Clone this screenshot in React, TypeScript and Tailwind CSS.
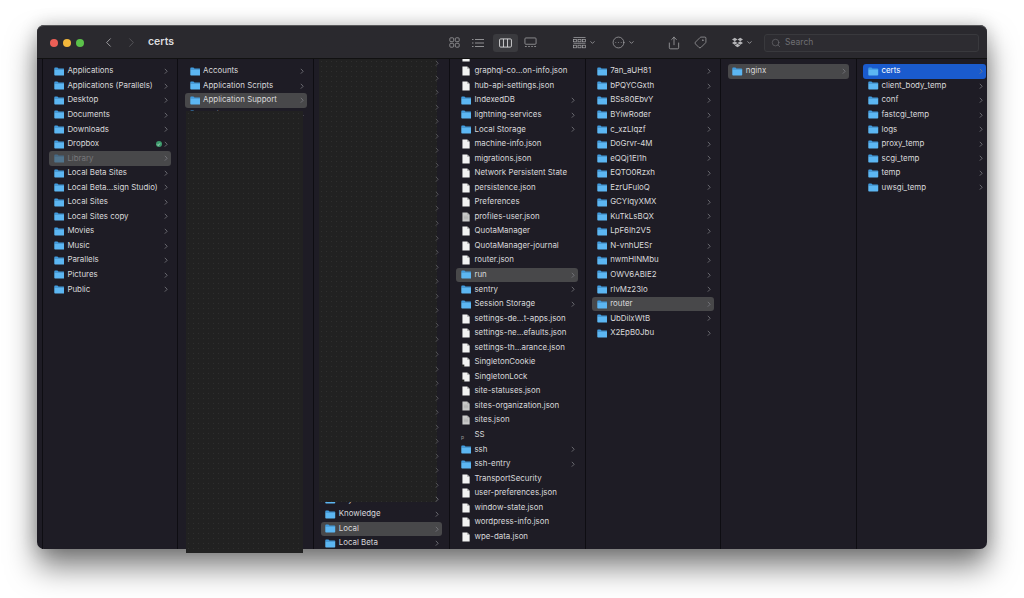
import { ChevronLeft, ChevronRight, ChevronDown, Search, Share, Tag, CircleEllipsis } from 'lucide-react';
import { FaDropbox } from 'react-icons/fa';

type Kind = 'dir' | 'file' | 'grayfile' | 'alias' | 'exec';

type Item = {
  name: string;
  kind?: Kind;
  active?: boolean;
  blue?: boolean;
  dim?: boolean;
  synced?: boolean;
};

const FolderIcon = ({ dim }: { dim?: boolean }) => (
  <svg viewBox="0 0 11 9" className={`w-[10.5px] h-[9px] shrink-0 ${dim ? 'opacity-40' : ''}`}>
    <path d="M0.3 1.1C0.3 0.6 0.6 0.3 1.1 0.3H3.6L4.7 1.4H9.9C10.4 1.4 10.7 1.7 10.7 2.2V2.6H0.3Z" fill="#3f9be0" />
    <path d="M0.3 2.4H10.7V8C10.7 8.5 10.4 8.8 9.9 8.8H1.1C0.6 8.8 0.3 8.5 0.3 8Z" fill="#5cb6f2" />
  </svg>
);

const FileIcon = ({ gray, alias }: { gray?: boolean; alias?: boolean }) => (
  <svg viewBox="0 0 9 11" className="w-[8px] h-[10px] ml-[1px] mr-[1.5px] shrink-0">
    <path d="M0.5 0.3H5.8L8.6 3.1V10.7H0.5Z" fill={gray ? '#c9c9c9' : '#f2f2f2'} />
    <path d="M5.8 0.3L8.6 3.1H5.8Z" fill="#a8a8a8" />
    {gray && <path d="M2 4.5H7M2 6H7M2 7.5H7" stroke="#9a9a9a" strokeWidth="0.5" />}
    {alias && <rect x="0" y="8.4" width="2.6" height="2.6" fill="#222" />}
  </svg>
);

const Chevron = ({ dim }: { dim?: boolean }) => (
  <svg viewBox="0 0 5 8" className={`w-[4px] h-[6.5px] shrink-0 relative z-10 ${dim ? 'text-[#5f5f63]' : 'text-[#7c7c81]'}`}>
    <path d="M1 1L4 4L1 7" fill="none" stroke="currentColor" strokeWidth="1" />
  </svg>
);

const Row = ({ item }: { item: Item }) => {
  const kind = item.kind ?? 'dir';
  const bg = item.blue ? 'bg-[#1a5bcd]' : item.active ? 'bg-[#48484a]' : '';
  const text = item.blue ? 'text-white' : item.dim ? 'text-[#77777a]' : 'text-[#d9d9db]';

  return (
    <div className={`h-[14.55px] shrink-0 flex items-center pl-[4.6px] pr-[3px] rounded-[3px] ${bg}`}>
      {kind === 'dir' && <FolderIcon dim={item.dim} />}
      {kind === 'file' && <FileIcon />}
      {kind === 'grayfile' && <FileIcon gray />}
      {kind === 'alias' && <FileIcon alias />}
      {kind === 'exec' && (
        <span className="w-[10.5px] shrink-0 text-[5px] leading-none pt-[6px] text-[#9a9a9a]">p</span>
      )}
      <span className={`ml-[3px] flex-1 whitespace-nowrap ${text}`}>{item.name}</span>
      {item.synced && (
        <span className="w-[6px] h-[6px] rounded-full bg-[#3c9a6c] mr-[2px] flex items-center justify-center">
          <svg viewBox="0 0 6 6" className="w-[5px] h-[5px]">
            <path d="M1.4 3L2.6 4.2L4.6 1.8" fill="none" stroke="#e8f5ee" strokeWidth="0.8" />
          </svg>
        </span>
      )}
      {kind === 'dir' && <Chevron />}
    </div>
  );
};

const names = (list: string[], kind: Kind = 'dir'): Item[] => list.map((name) => ({ name, kind }));

const col1: Item[] = [
  ...names(['Applications', 'Applications (Parallels)', 'Desktop', 'Documents', 'Downloads']),
  { name: 'Dropbox', synced: true },
  { name: 'Library', active: true, dim: true },
  ...names([
    'Local Beta Sites',
    'Local Beta...sign Studio)',
    'Local Sites',
    'Local Sites copy',
    'Movies',
    'Music',
    'Parallels',
    'Pictures',
    'Public',
  ]),
];

const col2: Item[] = [
  { name: 'Accounts' },
  { name: 'Application Scripts' },
  { name: 'Application Support', active: true },
  { name: 'Assistant' },
];

const col4: Item[] = [
  { name: '', kind: 'file' },
  ...names(['graphql-co...on-info.json', 'hub-api-settings.json'], 'file'),
  ...names(['IndexedDB', 'lightning-services', 'Local Storage']),
  ...names(['machine-info.json', 'migrations.json', 'Network Persistent State', 'persistence.json', 'Preferences'], 'file'),
  { name: 'profiles-user.json', kind: 'grayfile' },
  ...names(['QuotaManager', 'QuotaManager-journal', 'router.json'], 'file'),
  { name: 'run', active: true },
  ...names(['sentry', 'Session Storage']),
  ...names(['settings-de...t-apps.json', 'settings-ne...efaults.json', 'settings-th...arance.json'], 'file'),
  ...names(['SingletonCookie', 'SingletonLock'], 'alias'),
  { name: 'site-statuses.json', kind: 'file' },
  ...names(['sites-organization.json', 'sites.json'], 'grayfile'),
  { name: 'SS', kind: 'exec' },
  ...names(['ssh', 'ssh-entry']),
  ...names(['TransportSecurity', 'user-preferences.json', 'window-state.json', 'wordpress-info.json', 'wpe-data.json'], 'file'),
];

const col5: Item[] = [
  ...names([
    '7an_aUH81',
    'bPQYCGxth',
    'BSs80EbvY',
    'BYiwRoder',
    'c_xzLIqzf',
    'DoGrvr-4M',
    'eQQj1EI1h',
    'EQTO0Rzxh',
    'EzrUFuloQ',
    'GCYIqyXMX',
    'KuTkLsBQX',
    'LpF6Ih2V5',
    'N-vnhUESr',
    'nwmHINMbu',
    'OWV6ABIE2',
    'rIvMz23lo',
  ]),
  { name: 'router', active: true },
  ...names(['UbDilxWtB', 'X2EpB0Jbu']),
];

const col7: Item[] = [
  { name: 'certs', blue: true },
  ...names(['client_body_temp', 'conf', 'fastcgi_temp', 'logs', 'proxy_temp', 'scgi_temp', 'temp', 'uwsgi_temp']),
];

const dots = 'bg-[#212121] bg-[radial-gradient(#2e2e2e_0.5px,transparent_0.7px)] bg-[length:5px_5px]';

const Column = ({ items }: { items: Item[] }) => (
  <div className="w-[135.7px] shrink-0 border-r border-[#0e0d12] px-[6.5px] pt-[5px] flex flex-col">
    {items.map((item) => (
      <Row key={item.name} item={item} />
    ))}
  </div>
);

const ToolbarIcons = () => (
  <div className="flex items-center text-[#a9a9ac]">
    <svg viewBox="0 0 12 12" className="w-[11px] h-[11px]" fill="none" stroke="currentColor" strokeWidth="0.8">
      <rect x="0.9" y="0.9" width="4.2" height="4.2" rx="1" />
      <rect x="6.9" y="0.9" width="4.2" height="4.2" rx="1" />
      <rect x="0.9" y="6.9" width="4.2" height="4.2" rx="1" />
      <rect x="6.9" y="6.9" width="4.2" height="4.2" rx="1" />
    </svg>
    <svg viewBox="0 0 12 10" className="w-[12px] h-[10px] ml-[12px]" fill="none" stroke="currentColor" strokeWidth="0.8">
      <path d="M3 1.5H12M3 5H12M3 8.5H12M0 1.5H1.5M0 5H1.5M0 8.5H1.5" />
    </svg>
    <div className="w-[25px] h-[18px] ml-[9px] rounded-[3px] bg-[#3a3a3e] flex items-center justify-center text-[#e4e4e6]">
      <svg viewBox="0 0 14 10" className="w-[13px] h-[10px]" fill="none" stroke="currentColor" strokeWidth="0.9">
        <rect x="0.6" y="0.6" width="12.8" height="8.8" rx="1.2" />
        <path d="M4.8 0.6V9.4M9.2 0.6V9.4" />
      </svg>
    </div>
    <svg viewBox="0 0 14 11" className="w-[13px] h-[11px] ml-[6px]" fill="none" stroke="currentColor" strokeWidth="0.8">
      <rect x="1" y="0.6" width="12" height="6.8" rx="1" />
      <path d="M1 9.8H3M4.5 9.8H6.3M7.8 9.8H9.6M11 9.8H13" />
    </svg>
  </div>
);

const GroupIcon = () => (
  <div className="flex items-center gap-[3px] text-[#a9a9ac]">
    <svg viewBox="0 0 13 12" className="w-[13px] h-[12px]" fill="none" stroke="currentColor" strokeWidth="0.7">
      <path d="M0.5 0.5H12.5" />
      <rect x="0.5" y="2.4" width="3" height="2.4" />
      <rect x="5" y="2.4" width="3" height="2.4" />
      <rect x="9.5" y="2.4" width="3" height="2.4" />
      <path d="M0.5 6.3H12.5" />
      <rect x="0.5" y="8.2" width="3" height="2.6" />
      <rect x="5" y="8.2" width="3" height="2.6" />
      <rect x="9.5" y="8.2" width="3" height="2.6" />
    </svg>
    <ChevronDown className="w-[7px] h-[7px]" strokeWidth={2.5} />
  </div>
);

const TitleBar = () => (
  <div className="h-[34px] shrink-0 bg-[#2a292e] border-t border-[#58585a] rounded-t-[7px] flex items-center pl-[13px] pt-[1px] border-b-[#111] border-b">
    <div className="flex items-center gap-[5px]">
      <span className="w-[8px] h-[8px] rounded-full bg-[#ec5f56]" />
      <span className="w-[8px] h-[8px] rounded-full bg-[#f3b73b]" />
      <span className="w-[8px] h-[8px] rounded-full bg-[#5bc14a]" />
    </div>
    <ChevronLeft className="w-[15px] h-[15px] ml-[17px] text-[#b5b5b8]" strokeWidth={1.3} />
    <ChevronRight className="w-[15px] h-[15px] ml-[8px] text-[#5c5c60]" strokeWidth={1.3} />
    <span className="ml-[9px] text-[10.5px] font-semibold text-[#dcdcde]">certs</span>
    <div className="ml-[275px]">
      <ToolbarIcons />
    </div>
    <div className="ml-[36px]">
      <GroupIcon />
    </div>
    <div className="ml-[16px] flex items-center gap-[3px] text-[#a9a9ac]">
      <CircleEllipsis className="w-[13px] h-[13px]" strokeWidth={1.3} />
      <ChevronDown className="w-[7px] h-[7px]" strokeWidth={2.5} />
    </div>
    <Share className="w-[14px] h-[14px] ml-[32px] text-[#a9a9ac]" strokeWidth={1.3} />
    <Tag className="w-[13px] h-[13px] ml-[13px] text-[#a9a9ac] rotate-90" strokeWidth={1.3} />
    <div className="ml-[25px] flex items-center gap-[3px] text-[#b5b5b8]">
      <FaDropbox className="w-[11px] h-[11px]" />
      <ChevronDown className="w-[7px] h-[7px]" strokeWidth={2.5} />
    </div>
    <div className="ml-[11px] w-[215px] h-[18px] rounded-[3px] border border-[#39393d] bg-[#2d2c31] flex items-center pl-[6px] gap-[4px] text-[#6f6f73]">
      <Search className="w-[10px] h-[10px]" strokeWidth={1.5} />
      <span className="text-[8.5px]">Search</span>
    </div>
  </div>
);

const App = () => {
  return (
    <div className="w-[1024px] h-[598px] bg-white overflow-hidden pl-[37px] pt-[25px] font-['Inter',sans-serif]">
      <div className="w-[950px] h-[524px] flex flex-col rounded-[7px] bg-[#1e1c25] shadow-[0_18px_30px_rgba(0,0,0,0.5),0_0_18px_rgba(0,0,0,0.2)] text-[7.9px] leading-none">
        <TitleBar />
        <div className="flex-1 flex min-h-0">
          {/* sliver of the scrolled-away column */}
          <div className="w-[5.8px] shrink-0 border-r border-[#0e0d12] rounded-bl-[7px]" />

          <Column items={col1} />

          <div className="relative w-[135.7px] shrink-0 border-r border-[#0e0d12] px-[6.5px] pt-[5px] flex flex-col">
            {col2.map((item) => (
              <Row key={item.name} item={item} />
            ))}
            {/* undrawn part of the list, hangs past the window */}
            <div className={`absolute left-[8px] w-[117px] top-[52px] -bottom-[4px] z-20 ${dots}`} />
          </div>

          <div className="relative w-[135.7px] shrink-0 border-r border-[#0e0d12] px-[6.5px] flex flex-col overflow-hidden">
            <div className="-mt-[3px] flex flex-col">
              {Array.from({ length: 30 }, (_, i) => (
                <div key={i} className="h-[14.55px] shrink-0 flex items-center justify-end pr-[3px]">
                  <Chevron dim />
                </div>
              ))}
              <Row item={{ name: 'Keychains' }} />
              {[{ name: 'Knowledge' }, { name: 'Local', active: true }, { name: 'Local Beta' }].map((item) => (
                <Row key={item.name} item={item} />
              ))}
            </div>
            <div className={`absolute left-[5px] w-[118px] top-0 h-[443px] ${dots}`} />
          </div>

          <div className="w-[135.7px] shrink-0 border-r border-[#0e0d12] px-[6.5px] pt-[5px] overflow-hidden">
            <div className="-mt-[14.55px] flex flex-col">
              {col4.map((item) => (
                <Row key={item.name} item={item} />
              ))}
            </div>
          </div>

          <Column items={col5} />
          <Column items={[{ name: 'nginx', active: true }]} />

          <div className="flex-1 pl-[6.5px] pr-[1px] pt-[5px] flex flex-col">
            {col7.map((item) => (
              <Row key={item.name} item={item} />
            ))}
          </div>
        </div>
      </div>
    </div>
  );
};

export default App;
